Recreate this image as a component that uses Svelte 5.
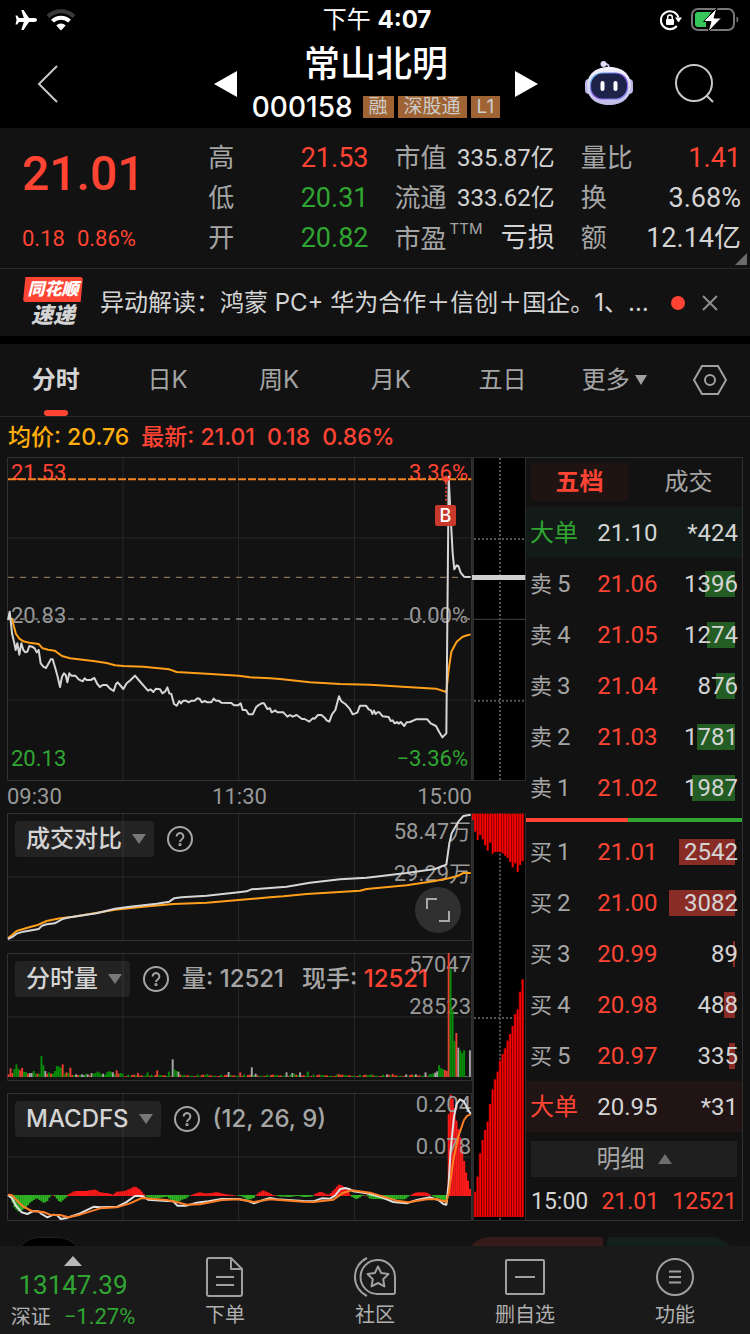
<script>
  const quotes = [
    [
      { label: '高', value: '21.53', tone: 'up' },
      { label: '低', value: '20.31', tone: 'down' },
      { label: '开', value: '20.82', tone: 'down' }
    ],
    [
      { label: '市值', value: '335.87亿', small: true },
      { label: '流通', value: '333.62亿', small: true },
      { label: '市盈', sup: 'TTM', value: '亏损' }
    ],
    [
      { label: '量比', value: '1.41', tone: 'up' },
      { label: '换', value: '3.68%' },
      { label: '额', value: '12.14亿' }
    ]
  ];

  const periods = ['分时', '日K', '周K', '月K', '五日'];

  // depth = bar length as a share of the row width, in percent
  const asks = [
    { side: '卖', n: 5, price: '21.06', qty: '1396', depth: 14 },
    { side: '卖', n: 4, price: '21.05', qty: '1274', depth: 13 },
    { side: '卖', n: 3, price: '21.04', qty: '876', depth: 9 },
    { side: '卖', n: 2, price: '21.03', qty: '1781', depth: 18 },
    { side: '卖', n: 1, price: '21.02', qty: '1987', depth: 20 }
  ];
  const bids = [
    { side: '买', n: 1, price: '21.01', qty: '2542', depth: 26 },
    { side: '买', n: 2, price: '21.00', qty: '3082', depth: 31 },
    { side: '买', n: 3, price: '20.99', qty: '89', depth: 1 },
    { side: '买', n: 4, price: '20.98', qty: '488', depth: 5 },
    { side: '买', n: 5, price: '20.97', qty: '335', depth: 3 }
  ];

  // Chart coordinates: three units per pixel
  const priceLine =
    '24,510 29,485 33,520 36,550 42,575 47,600 52,580 58,614 64,580 70,600 76,607 82,605 88,588 96,590 104,595 110,607 116,600 122,640 130,650 138,654 146,640 152,628 158,628 166,655 173,680 180,711 186,680 192,670 197,675 202,697 208,670 214,677 226,677 236,688 248,694 254,685 260,690 272,690 283,684 292,702 300,711 308,705 320,705 330,716 341,723 348,702 353,697 360,705 370,717 380,700 392,690 405,677 416,690 430,706 444,722 452,718 460,726 468,716 480,718 487,730 496,724 502,712 508,730 514,732 522,762 530,767 538,753 543,760 550,752 558,752 566,757 575,752 584,752 592,745 598,746 606,757 614,753 622,757 634,757 641,746 648,752 656,752 664,758 694,759 702,766 714,766 722,760 728,780 738,780 746,793 758,793 768,772 776,765 785,760 792,760 802,777 810,775 815,787 826,781 832,787 850,787 862,800 870,795 878,800 890,795 906,807 914,807 928,815 938,805 944,806 954,795 964,795 974,803 980,811 988,815 996,793 1006,780 1017,739 1024,754 1036,762 1048,775 1058,793 1072,788 1080,767 1098,767 1106,778 1113,781 1117,792 1122,782 1127,792 1132,787 1138,787 1148,799 1166,801 1172,813 1178,811 1184,820 1192,816 1196,821 1202,816 1213,828 1220,817 1230,816 1248,808 1282,808 1292,820 1308,828 1318,847 1327,862 1339,850 1346,80 1348,120 1352,200 1358,310 1363,358 1370,346 1375,348 1382,368 1392,380 1412,381';
  const averageLine =
    '24,505 36,506 42,530 48,552 58,566 70,574 88,578 116,582 128,595 145,599 164,602 186,618 210,625 280,633 320,639 345,646 370,648 430,650 508,658 530,666 620,671 716,677 750,682 810,685 840,687 930,697 1020,702 1110,704 1220,711 1308,716 1339,726 1346,660 1354,605 1370,575 1388,560 1402,556 1412,553';
  const todayLine =
    '24,417 40,409 50,401 70,395 116,387 126,377 140,373 164,370 190,356 210,352 290,340 345,326 390,320 470,311 508,305 522,295 545,292 620,287 716,277 740,274 754,268 810,264 860,260 930,248 1020,238 1100,233 1220,219 1305,207 1339,194 1348,130 1355,100 1375,65 1390,48 1412,44';
  const previousLine =
    '24,414 36,405 50,393 90,381 110,376 140,363 180,355 220,350 345,329 430,320 520,312 620,308 716,300 810,292 850,289 920,282 1080,272 1100,267 1220,256 1300,244 1350,234 1375,227 1390,219 1412,219';
  const difLine =
    '24,1185 36,1195 48,1217 65,1237 82,1242 100,1233 115,1234 125,1242 142,1252 160,1244 172,1246 182,1257 200,1254 240,1240 282,1220 300,1222 352,1220 378,1207 405,1188 428,1188 444,1199 500,1203 520,1204 532,1217 560,1217 590,1208 625,1204 665,1197 716,1197 745,1203 762,1210 790,1200 810,1194 830,1198 910,1203 940,1204 965,1195 990,1196 1005,1187 1020,1168 1035,1164 1050,1168 1060,1174 1100,1180 1140,1190 1180,1206 1220,1210 1250,1200 1290,1192 1315,1200 1330,1212 1339,1214 1346,1150 1352,1050 1362,950 1370,912 1380,898 1392,905 1402,925 1412,942';
  const deaLine =
    '24,1184 36,1186 50,1201 70,1220 95,1233 130,1236 150,1244 180,1245 205,1252 240,1244 300,1225 350,1222 390,1210 425,1194 450,1196 500,1200 530,1206 560,1214 600,1213 665,1200 716,1198 762,1206 810,1198 910,1205 940,1206 1000,1199 1030,1178 1055,1171 1110,1178 1150,1190 1190,1202 1225,1207 1280,1198 1310,1197 1339,1206 1346,1180 1360,1080 1375,1010 1392,960 1402,947 1412,944';

  const STEP = 5.79;
  const barX = (i) => 23 + i * STEP;

  // Minute volume: colour letter and height for the opening hour, later spikes by position
  const opening =
    'r8 r26 r12 g24 g38 g25 r20 r27 g15 g15 r10 w12 w12 g18 g10 r10 g10 g63 g35 w18 r10 g14 r10 g10 g18 g33 g32 g28 r38 g10 r14 g12 r28 r6 g6 w8 r6 g6 w8 w5 g10 w8 r5 w12 g10 g12 g16 g14 g8 w10 g6 g14 g17 g16 w14 g8 r20 r10 g12 g10'.split(' ');
  const spikes = {
    415: 'r12', 442: 'g14', 470: 'r20', 505: 'g16', 516: 'w53', 522: 'g22', 528: 'g18', 534: 'w16', 620: 'g9',
    684: 'w15', 723: 'r14', 753: 'w29', 766: 'w10', 860: 'w14', 878: 'w12', 885: 'g10', 902: 'w14', 926: 'g16',
    1018: 'r9', 1115: 'g8', 1158: 'w8', 1180: 'r9', 1220: 'w8', 1250: 'w8', 1277: 'w14', 1288: 'g8', 1294: 'g9',
    1300: 'g11', 1306: 'w13', 1312: 'w17', 1318: 'g35', 1324: 'g26', 1330: 'g24', 1336: 'r21', 1341: 'r18',
    1346: 'r372', 1352: 'g325', 1358: 'g200', 1364: 'g108', 1370: 'r132', 1376: 'w88', 1382: 'g80', 1388: 'g72',
    1394: 'g80', 1400: 'w2', 1406: 'w1', 1411: 'w80'
  };
  const volume = [];
  for (let i = 0; i < 240; i++) {
    const c = 'rgwgwrg'[(i * 5 + (i >> 2)) % 7];
    volume.push(opening[i] ?? c + (2 + ((i * 7 + (i >> 1) * 3) % 6)));
  }
  for (const [x, v] of Object.entries(spikes)) {
    volume[Math.min(239, Math.round((Number(x) - 26) / STEP))] = v;
  }
  const volumeFill = { r: '#e8402f', g: '#078c07', w: '#a6a6a6' };

  // MACD histogram, linear between anchor points [x, height]
  const anchors = [
    [24, 5], [30, -4], [45, -40], [58, -50], [75, -38], [90, -22], [110, -8], [130, -22], [140, -20], [150, -2],
    [160, 1], [168, -6], [180, -22], [200, -5], [206, 5], [225, 14], [255, 14], [285, 19], [300, 10], [320, 8],
    [340, 3], [350, 12], [375, 14], [405, 28], [420, 18], [434, 2], [442, -6], [470, -10], [500, -4], [520, -18],
    [535, -18], [560, -8], [572, 2], [595, 10], [620, 7], [650, 10], [680, 4], [705, 1], [725, -3], [745, -14],
    [762, -8], [772, 6], [790, 16], [808, 8], [820, 2], [840, -4], [870, -5], [892, -1], [910, -5], [938, -4],
    [945, 5], [960, 12], [985, 3], [995, 10], [1017, 34], [1030, 28], [1042, 16], [1055, -4], [1070, -12],
    [1085, -2], [1098, 1], [1110, -10], [1150, -12], [1215, -12], [1235, 4], [1250, 10], [1280, 10], [1300, -4],
    [1325, -12], [1341, -22], [1342, 205], [1352, 305], [1360, 285], [1370, 220], [1380, 180], [1388, 130],
    [1398, 70], [1412, 10]
  ];
  const histogram = Array.from({ length: 240 }, (_, i) => {
    const x = barX(i) + STEP / 2;
    const k = Math.max(1, anchors.findIndex((a) => a[0] >= x));
    const [x0, h0] = anchors[k - 1];
    const [x1, h1] = anchors[k];
    return Math.round(h0 + ((h1 - h0) * (x - x0)) / (x1 - x0));
  });

  const chipTop = [60, 95, 120, 105, 118, 136, 152, 128, 161, 156, 156, 156, 160, 167, 174, 186, 202, 190, 216, 195, 183];
  const chipBottom = [1251, 1175, 1130, 1060, 1020, 990, 965, 912, 868, 838, 815, 782, 762, 745, 722, 702, 678, 642, 628, 575, 538];

  let period = $state('分时');
  let book = $state('五档');
</script>

{#snippet grid(top, height)}
  <g class="grid-lines">
    <rect x="22.5" y={top + 1.5} width="1392" height={height - 3} />
    <path d="M369 {top}v{height}M716 {top}v{height}M1064 {top}v{height}" />
  </g>
{/snippet}

{#snippet help(name)}
  <button class="help" aria-label="{name}说明">
    <svg viewBox="0 0 26 26" width="26" height="26">
      <circle cx="13" cy="13" r="12" />
      <path d="M9.600 10.500a3.400 3.400 0 1 1 5.400 2.700c-1.400 1-2 1.500-2 2.800" />
      <circle cx="13" cy="18.600" r=".7" />
    </svg>
  </button>
{/snippet}

{#snippet level(row, kind)}
  <tr class={kind}>
    <th scope="row">{row.side}<span>{row.n}</span></th>
    <td class="up">{row.price}</td>
    <td class="qty"><i style="width: {row.depth * 3}%"></i><b>{row.qty}</b></td>
  </tr>
{/snippet}

<div class="page">
  <div class="status">
    <div class="status-side">
      <svg viewBox="0 0 24 22" width="24" height="22" fill="#fff">
        <path d="M23 11c0-1.300-1.500-1.900-3-1.900h-5L9.500 1H7.300l2.500 8.100H5L3.200 6.500H1.500L2.600 11l-1.100 4.500h1.700L5 12.900h4.800L7.300 21h2.200L15 12.900h5c1.500 0 3-.6 3-1.900z" />
      </svg>
      <svg viewBox="0 0 30 22" width="30" height="22">
        <path d="M2 7.500a18.500 18.500 0 0 1 26 0" fill="none" stroke="#3a3a3a" stroke-width="4" />
        <path d="M6.500 12.200a12 12 0 0 1 17 0" fill="none" stroke="#fff" stroke-width="4" />
        <path d="M15 21.500l-4.700-5a6.500 6.500 0 0 1 9.400 0z" fill="#fff" />
      </svg>
    </div>
    <div class="clock">下午 <b>4:07</b></div>
    <div class="status-side end">
      <svg viewBox="0 0 24 24" width="24" height="24">
        <path d="M20.500 9.500A9 9 0 1 0 18.800 18" fill="none" stroke="#fff" stroke-width="2" />
        <path d="M17 9.500h7l-3.500 5z" fill="#fff" />
        <rect x="8" y="11" width="8" height="6" rx="1" fill="#fff" />
        <path d="M9.700 11V9.300a2.300 2.300 0 0 1 4.600 0V11" fill="none" stroke="#fff" stroke-width="1.500" />
      </svg>
      <svg viewBox="0 0 50 26" width="50" height="26">
        <rect x="2" y="2" width="42" height="21" rx="6" fill="none" stroke="#777" stroke-width="2" />
        <path d="M46.500 9.500c2.500 1 2.500 5 0 6z" fill="#777" />
        <path d="M8 5h13l-5 9v6H8a3 3 0 0 1-3-3V8a3 3 0 0 1 3-3z" fill="#35c759" />
        <path d="M27 1L13.500 14.500H21L18 25l13.500-14H24z" fill="#fff" stroke="#000" stroke-width="1" />
      </svg>
    </div>
  </div>

  <header>
    <button class="icon-button" aria-label="返回">
      <svg viewBox="0 0 24 40" width="24" height="40" fill="none" stroke="#c8c8c8" stroke-width="2">
        <path d="M21 2L3 20l18 18" />
      </svg>
    </button>
    <div class="stock">
      <button class="icon-button" aria-label="上一只">
        <svg viewBox="0 0 23 26" width="23" height="26"><path d="M0 13L23 0v26z" fill="#fff" /></svg>
      </button>
      <div class="names">
        <h1>常山北明</h1>
        <div class="code">
          <span class="digits">000158</span>
          <span class="tag">融</span><span class="tag">深股通</span><span class="tag">L1</span>
        </div>
      </div>
      <button class="icon-button" aria-label="下一只">
        <svg viewBox="0 0 23 26" width="23" height="26"><path d="M23 13L0 0v26z" fill="#fff" /></svg>
      </button>
    </div>
    <div class="tools">
      <button class="icon-button" aria-label="智能助手">
        <svg viewBox="0 0 50 46" width="50" height="46">
          <defs>
            <linearGradient id="shell" x1="0" y1="0" x2="0" y2="1">
              <stop offset="0" stop-color="#f6f4ff" />
              <stop offset="1" stop-color="#bdbbe6" />
            </linearGradient>
            <linearGradient id="rim" x1="0" y1="0" x2="1" y2="1">
              <stop offset="0" stop-color="#53c8f5" />
              <stop offset=".5" stop-color="#8b4be8" />
              <stop offset="1" stop-color="#6f8df2" />
            </linearGradient>
          </defs>
          <path d="M25 8c0-4-1-5-5-5.500" fill="none" stroke="#c9c6ee" stroke-width="2" />
          <circle cx="19.500" cy="3" r="3" fill="#dedcf8" />
          <rect x="1" y="18" width="8" height="15" rx="4" fill="#b9b5e4" />
          <rect x="41" y="18" width="8" height="15" rx="4" fill="#b9b5e4" />
          <path d="M25 6c13 0 22 7 22 19S38 44 25 44 3 37 3 25 12 6 25 6z" fill="url(#shell)" />
          <rect x="6.500" y="12" width="37" height="26" rx="12" fill="#1d2348" stroke="url(#rim)" stroke-width="1.200" />
          <rect x="16.500" y="20" width="4" height="10" rx="2" fill="#fff" />
          <rect x="29.500" y="20" width="4" height="10" rx="2" fill="#fff" />
        </svg>
      </button>
      <button class="icon-button" aria-label="搜索">
        <svg viewBox="0 0 42 42" width="42" height="42" fill="none" stroke="#c8c8c8" stroke-width="2">
          <circle cx="20" cy="20" r="18" /><path d="M33 33l6 6" />
        </svg>
      </button>
    </div>
  </header>

  <section class="summary">
    <div class="last">
      <strong>21.01</strong>
      <div><span>0.18</span><span>0.86%</span></div>
    </div>
    {#each quotes as column}
      <dl>
        {#each column as q}
          <div>
            <dt>{q.label}{#if q.sup}<sup>{q.sup}</sup>{/if}</dt>
            <dd class={q.tone} class:small={q.small}>{q.value}</dd>
          </div>
        {/each}
      </dl>
    {/each}
    <svg class="corner" viewBox="0 0 12 12" width="12" height="12"><path d="M12 0v12H0z" fill="#6b6b6b" /></svg>
  </section>

  <section class="news">
    <div class="badge"><span class="badge-top">同花顺</span><span class="badge-bottom">速递</span></div>
    <a href="#news">异动解读：鸿蒙 PC+ 华为合作＋信创＋国企。1、…</a>
    <i class="dot"></i>
    <button class="icon-button" aria-label="关闭">
      <svg viewBox="0 0 18 18" width="18" height="18" stroke="#8d8d8d" stroke-width="2"><path d="M2 2l14 14M16 2L2 16" /></svg>
    </button>
  </section>

  <nav class="periods">
    {#each periods as p}
      <button class:active={period === p} onclick={() => (period = p)}>{p}</button>
    {/each}
    <button>更多<svg viewBox="0 0 12 10" width="12" height="10"><path d="M0 0h12L6 10z" fill="#a0a0a0" /></svg></button>
    <button aria-label="设置">
      <svg viewBox="0 0 36 32" width="36" height="32" fill="none" stroke="#a0a0a0" stroke-width="2">
        <path d="M10 2h16l8 14-8 14H10L2 16z" /><circle cx="18" cy="16" r="5" />
      </svg>
    </button>
  </nav>

  <p class="figures">
    <span class="gold">均价: 20.76</span><span>最新: 21.01</span><span>0.18</span><span>0.86%</span>
  </p>

  <main>
    <div class="charts">
      <div class="panel price">
        <span class="mark tl up">21.53</span><span class="mark tr up">3.36%</span>
        <span class="mark ml">20.83</span><span class="mark mr">0.00%</span>
        <span class="mark bl down">20.13</span><span class="mark br down">−3.36%</span>
        <svg class="plot" viewBox="21 21 1395 972" preserveAspectRatio="none">
          {@render grid(21, 972)}
          <path class="grid-line" d="M24 264H1414M24 750H1414" />
          <path d="M24 507H1414" stroke="#6a6a6a" stroke-dasharray="6 6" />
          <path class="thin" d="M24 382H1414" stroke="#a58c68" stroke-dasharray="6 6" />
          <path d="M24 88H1414" stroke="#f5831f" stroke-dasharray="8 2" />
          <polyline points={averageLine} stroke="#ff9f1a" />
          <polyline points={priceLine} stroke="#d6d6d6" />
          <path d="M1338 98V160" stroke="#c8382b" stroke-dasharray="2 2" />
          <path d="M1338 76l12 12-12 12-12-12z" fill="#ff4433" />
        </svg>
        <span class="buy">B</span>
      </div>
      <div class="axis"><span>09:30</span><span>11:30</span><span>15:00</span></div>

      <div class="panel">
        <div class="panel-head">
          <button class="pick">成交对比<i></i></button>
          {@render help('成交对比')}
        </div>
        <div class="scale lowered"><span>58.47万</span><span>29.29万</span></div>
        <svg class="plot" viewBox="21 39 1395 384" preserveAspectRatio="none">
          {@render grid(39, 384)}
          <path class="grid-line" d="M24 231H1414" />
          <polyline points={previousLine} stroke="#ff9f1a" />
          <polyline points={todayLine} stroke="#d6d6d6" />
        </svg>
        <button class="expand" aria-label="全屏">
          <svg viewBox="0 0 24 24" width="24" height="24" fill="none" stroke="#a8a8a8" stroke-width="2">
            <path d="M1 11V1h10M23 13v10H13" />
          </svg>
        </button>
      </div>

      <div class="panel">
        <div class="panel-head">
          <button class="pick">分时量<i></i></button>
          {@render help('分时量')}
          <span>量: 12521</span><span class="hand">现手: <b class="up">12521</b></span>
        </div>
        <div class="scale"><span>57047</span><span>28523</span></div>
        <svg class="plot" viewBox="21 459 1395 384" preserveAspectRatio="none">
          {@render grid(459, 384)}
          <path class="grid-line" d="M24 651H1414" />
          {#each volume as v, i}
            <rect x={barX(i)} y={831 - Number(v.slice(1))} width={STEP} height={v.slice(1)} fill={volumeFill[v[0]]} />
          {/each}
        </svg>
      </div>

      <div class="panel">
        <div class="panel-head">
          <button class="pick">MACDFS<i></i></button>
          {@render help('MACDFS')}
          <span>(12, 26, 9)</span>
        </div>
        <svg class="plot" viewBox="21 879 1395 384" preserveAspectRatio="none">
          {@render grid(879, 384)}
          <path class="grid-line" d="M24 1071H1414" />
          {#each histogram as h, i}
            <rect x={barX(i)} y={h > 0 ? 1187 - h : 1185} width={STEP + 0.4} height={Math.abs(h) + 1} fill={h > 0 ? '#ff1a1a' : '#2fb324'} />
          {/each}
        </svg>
        <div class="scale"><span>0.204</span><span>0.078</span></div>
        <svg class="plot" viewBox="21 879 1395 384" preserveAspectRatio="none">
          <polyline points={difLine} stroke="#e0e0e0" />
          <polyline points={deaLine} stroke="#ff7f27" />
        </svg>
      </div>
    </div>

    <div class="chips">
      <svg class="chips-price" viewBox="636 21 162 972" preserveAspectRatio="none">
        <rect x="636" y="21" width="162" height="972" fill="#2b2b2b" />
        <rect x="642" y="24" width="153" height="966" fill="#000" />
        <path d="M642 267H795M642 752H795M720 24V990" stroke="#555" stroke-width="2" stroke-dasharray="2 2" />
        <path d="M642 508H795" stroke="#444" />
        <rect x="636" y="375" width="160" height="15" fill="#cfcfcf" />
      </svg>
      <svg class="chips-volume" viewBox="636 39 162 1224" preserveAspectRatio="none">
        <rect x="636" y="39" width="162" height="1224" fill="#2b2b2b" />
        <rect x="642" y="41" width="153" height="1219" fill="#000" />
        <path d="M642 654H795M720 41V1260" stroke="#555" stroke-width="2" stroke-dasharray="2 2" />
        {#each chipTop as y, i}
          <rect x={635 + i * 7.5} y="41" width="6" height={y - 41} fill="#f00" />
          <rect x={641 + i * 7.5} y="41" width="1.500" height={y - 46} fill="#8d0000" />
        {/each}
        {#each chipBottom as y, i}
          <rect x={635 + i * 7.5} y={y} width="6" height={1251 - y} fill="#f00" />
          <rect x={633.5 + i * 7.5} y={y} width="1.500" height={1251 - y} fill="#8d0000" />
        {/each}
      </svg>
    </div>

    <aside>
      <div class="book-tabs">
        {#each ['五档', '成交'] as b}
          <button class:active={book === b} onclick={() => (book = b)}>{b}</button>
        {/each}
      </div>
      <table>
        <tbody>
          <tr class="big-ask"><th scope="row" class="down">大单</th><td>21.10</td><td class="qty"><b>*424</b></td></tr>
          {#each asks as row}{@render level(row, 'ask')}{/each}
        </tbody>
      </table>
      <div class="ratio"><i></i></div>
      <table>
        <tbody>
          {#each bids as row}{@render level(row, 'bid')}{/each}
          <tr class="big-bid"><th scope="row" class="up">大单</th><td>20.95</td><td class="qty"><b>*31</b></td></tr>
        </tbody>
      </table>
      <button class="details">明细<i></i></button>
      <div class="trade"><span>15:00</span><span class="up">21.01</span><span class="up">12521</span></div>
    </aside>
  </main>

  <div class="peek"><i class="peek-dark"></i><i class="peek-buy"></i><i class="peek-sell"></i></div>

  <nav class="bottom">
    <button class="index">
      <i></i>
      <strong>13147.39</strong>
      <span>深证 <b>−1.27%</b></span>
    </button>
    <button>
      <svg viewBox="0 0 40 42" width="40" height="42">
        <path d="M4 2h22l11 11v25a2 2 0 0 1-2 2H4a2 2 0 0 1-2-2V4a2 2 0 0 1 2-2z" /><path d="M26 2v11h11M11 21h18M11 29h18" />
      </svg>
      下单
    </button>
    <button>
      <svg viewBox="0 0 44 42" width="44" height="42">
        <path d="M24 4h1a17 17 0 0 1 17 17v15a2 2 0 0 1-2 2H25a17 17 0 0 1-1-34z" />
        <path d="M14 2a21 21 0 0 0 0 38" />
        <path d="M25 10.500l3.200 6.600 7.200 1-5.200 5.100 1.200 7.200-6.400-3.400-6.400 3.400 1.200-7.200-5.200-5.100 7.200-1z" />
      </svg>
      社区
    </button>
    <button>
      <svg viewBox="0 0 42 42" width="42" height="42">
        <rect x="2" y="4" width="38" height="34" rx="1" /><path d="M11 21h20" />
      </svg>
      删自选
    </button>
    <button>
      <svg viewBox="0 0 42 42" width="42" height="42">
        <circle cx="21" cy="21" r="18" /><path d="M15 15.500h12M15 21h12M15 26.500h12" />
      </svg>
      功能
    </button>
  </nav>
</div>

<style>
  :global(body) {
    background: #121212;
  }
  .page {
    --up: #ff4433;
    --down: #31a531;
    --line: #292929;
    --text: #d4d4d4;
    --muted: #a5a5a5;
    --num: Roboto, 'Noto Sans CJK SC', sans-serif;
    min-height: 100vh;
    display: flex;
    flex-direction: column;
    background: #121212;
    color: var(--text);
    font-family: Inter, 'Noto Sans CJK SC', sans-serif;
    font-size: 24px;
    line-height: 32px;
  }
  .page :global(*) {
    box-sizing: border-box;
  }
  svg {
    display: block;
    flex: none;
  }
  button {
    background: none;
    border: 0;
    padding: 0;
    margin: 0;
    color: inherit;
    font: inherit;
    cursor: pointer;
  }
  h1,
  p,
  dl,
  dd {
    margin: 0;
  }
  .up {
    color: var(--up);
  }
  .down {
    color: var(--down);
  }
  .icon-button {
    display: flex;
    flex: none;
  }

  .status {
    display: grid;
    grid-template-columns: 1fr auto 1fr;
    align-items: center;
    height: 40px;
    padding: 0 10px 0 14px;
    background: #000;
    color: #fff;
    font-size: 24px;
  }
  .status-side {
    display: flex;
    align-items: center;
    gap: 8px;
  }
  .end {
    justify-content: flex-end;
  }
  header {
    display: grid;
    grid-template-columns: 1fr auto 1fr;
    align-items: center;
    height: 88px;
    padding: 0 34px 0 36px;
    background: #000;
    color: #fff;
  }
  .stock {
    display: flex;
    align-items: center;
    gap: 15px;
  }
  .names {
    display: flex;
    flex-direction: column;
    align-items: center;
  }
  h1 {
    font-size: 36px;
    line-height: 46px;
    font-weight: 500;
  }
  .code {
    display: flex;
    align-items: center;
    gap: 4px;
    height: 40px;
  }
  .digits {
    font-size: 28px;
    font-weight: 500;
    margin-right: 6px;
  }
  .tag {
    padding: 0 6px;
    background: #a06434;
    color: #ccc;
    font-size: 19px;
    line-height: 22px;
  }
  .tools {
    display: flex;
    align-items: center;
    justify-content: flex-end;
    gap: 40px;
  }

  .summary {
    position: relative;
    display: grid;
    grid-template-columns: repeat(4, 1fr);
    gap: 26px;
    height: 141px;
    padding: 10px 9px 0 22px;
    border-bottom: 1px solid var(--line);
  }
  .last {
    color: var(--up);
    font-family: var(--num);
  }
  .last strong {
    display: block;
    font-size: 48px;
    line-height: 72px;
    font-weight: 500;
  }
  .last div {
    display: flex;
    gap: 12px;
    padding-top: 13px;
    font-size: 22px;
  }
  dl div {
    display: flex;
    justify-content: space-between;
    align-items: center;
    height: 40px;
    white-space: nowrap;
  }
  dt {
    color: var(--muted);
    font-size: 26px;
  }
  sup {
    font-size: 15px;
    line-height: 16px;
    vertical-align: 14px;
    margin-left: 3px;
  }
  dd {
    font-family: var(--num);
    font-size: 27px;
  }
  dd.small {
    font-size: 24px;
  }
  .corner {
    position: absolute;
    right: 3px;
    bottom: 3px;
  }

  .news {
    display: flex;
    align-items: center;
    height: 75px;
    padding: 0 31px 0 23px;
    border-bottom: 8px solid #000;
  }
  .badge {
    display: flex;
    flex-direction: column;
    flex: none;
    width: 60px;
    margin-right: 17px;
    font-weight: 900;
    font-style: italic;
    text-align: center;
  }
  .badge-top {
    background: var(--up);
    border-radius: 3px;
    color: #fff;
    font-size: 17px;
    line-height: 25px;
    clip-path: polygon(4% 0, 100% 0, 96% 100%, 0 100%);
  }
  .badge-bottom {
    font-size: 22px;
    line-height: 26px;
  }
  .news a {
    flex: 1;
    min-width: 0;
    overflow: hidden;
    white-space: nowrap;
    color: var(--text);
    text-decoration: none;
  }
  .dot {
    flex: none;
    width: 14px;
    height: 14px;
    margin: 0 16px 0 20px;
    border-radius: 50%;
    background: var(--up);
  }

  .periods {
    display: grid;
    grid-template-columns: repeat(6, 1fr) 80px;
    height: 73px;
    border-bottom: 1px solid var(--line);
    color: var(--muted);
  }
  .periods button {
    position: relative;
    display: flex;
    align-items: center;
    justify-content: center;
    gap: 5px;
  }
  .periods .active {
    color: var(--text);
    font-weight: 700;
  }
  .periods .active::after {
    content: '';
    position: absolute;
    bottom: 0;
    width: 24px;
    height: 6px;
    border-radius: 3px;
    background: var(--up);
  }
  .figures {
    display: flex;
    align-items: center;
    gap: 12px;
    height: 40px;
    padding: 0 8px;
    color: var(--up);
    font-size: 23px;
    font-weight: 500;
  }
  .gold {
    color: #ffae0d;
  }

  main {
    display: grid;
    grid-template-columns: 465fr 54fr 217fr;
    padding: 0 7px;
  }
  .charts,
  .chips,
  aside {
    min-width: 0;
  }
  .panel {
    position: relative;
    height: 128px;
    margin-bottom: 12px;
  }
  .panel:last-child {
    margin-bottom: 0;
  }
  .panel.price {
    height: 324px;
    margin-bottom: 0;
  }
  .plot {
    position: absolute;
    inset: 0;
    width: 100%;
    height: 100%;
    pointer-events: none;
  }
  .plot path,
  .plot polyline {
    fill: none;
    stroke-width: 2;
    stroke-linejoin: round;
    vector-effect: non-scaling-stroke;
  }
  .plot path[fill] {
    fill: var(--up);
  }
  .plot .thin {
    stroke-width: 1;
  }
  .plot .grid-line,
  .grid-lines path {
    stroke: #fff;
    stroke-opacity: 0.09;
    stroke-width: 1;
  }
  .grid-lines rect {
    fill: none;
    stroke: #303030;
    stroke-width: 1;
    vector-effect: non-scaling-stroke;
  }
  .chips path {
    vector-effect: non-scaling-stroke;
  }
  .mark,
  .scale,
  .axis {
    color: #999;
    font-family: var(--num);
    font-size: 22px;
    line-height: 28px;
  }
  .mark,
  .scale {
    position: absolute;
  }
  .mark.up {
    color: var(--up);
  }
  .mark.down {
    color: var(--down);
  }
  .tl,
  .tr {
    top: 2px;
  }
  .ml,
  .mr {
    top: 145px;
  }
  .bl,
  .br {
    bottom: 8px;
  }
  .tl,
  .ml,
  .bl {
    left: 4px;
  }
  .tr,
  .mr,
  .br {
    right: 4px;
  }
  .buy {
    position: absolute;
    top: 48px;
    left: 94.4%;
    width: 21px;
    margin-left: -11px;
    background: #c8382b;
    border-radius: 2px;
    color: #fff;
    font-size: 18px;
    font-weight: 500;
    line-height: 21px;
    text-align: center;
  }
  .axis {
    display: flex;
    justify-content: space-between;
    align-items: center;
    height: 32px;
  }
  .panel-head {
    display: flex;
    align-items: center;
    height: 52px;
    padding-left: 8px;
    color: var(--muted);
    font-weight: 500;
    white-space: nowrap;
  }
  .panel-head span {
    margin-left: 13px;
  }
  .panel-head .hand {
    margin-left: 18px;
  }
  .panel-head b {
    font-weight: 500;
  }
  .pick {
    display: flex;
    align-items: center;
    gap: 10px;
    height: 36px;
    padding: 0 8px 0 11px;
    border-radius: 4px;
    background: #232323;
    color: var(--text);
  }
  .pick i {
    border: 7px solid transparent;
    border-top: 10px solid #777;
    border-bottom: 0;
  }
  .help {
    margin-left: 13px;
  }
  .help svg {
    fill: none;
    stroke: var(--muted);
    stroke-width: 2;
  }
  .scale {
    top: -2px;
    right: 1px;
    display: flex;
    flex-direction: column;
    gap: 14px;
    text-align: right;
  }
  .scale.lowered {
    top: 5px;
  }
  .expand {
    position: absolute;
    right: 11px;
    bottom: 8px;
    display: flex;
    align-items: center;
    justify-content: center;
    width: 46px;
    height: 46px;
    border-radius: 50%;
    background: #303030;
  }

  .chips {
    display: flex;
    flex-direction: column;
    gap: 32px;
  }
  .chips svg {
    width: 100%;
  }
  .chips-price {
    height: 324px;
  }
  .chips-volume {
    height: 408px;
  }

  aside {
    display: flex;
    flex-direction: column;
    border: 1px solid #303030;
    border-left: 0;
  }
  .book-tabs {
    display: grid;
    grid-template-columns: 97fr 97fr;
    gap: 12px;
    height: 49px;
    padding: 5px 5px 6px;
    color: var(--muted);
  }
  .book-tabs .active {
    border-radius: 4px;
    background: #201413;
    color: var(--up);
    font-weight: 700;
  }
  table {
    width: 100%;
    table-layout: fixed;
    border-collapse: collapse;
    font-family: var(--num);
  }
  tr {
    height: 51px;
  }
  th,
  td {
    padding: 1px 0 0;
    font-weight: 400;
    text-align: left;
  }
  th {
    width: 33%;
    padding-left: 4px;
  }
  th:not(.up, .down) {
    color: var(--muted);
    font-size: 22px;
  }
  th span {
    margin-left: 5px;
    font-size: 24px;
  }
  .qty {
    position: relative;
    width: 33%;
    padding-right: 4px;
    text-align: right;
  }
  .qty b {
    position: relative;
    font-weight: 400;
  }
  .qty i {
    position: absolute;
    top: 13px;
    right: 7px;
    height: 26px;
  }
  .ask i {
    background: #235d23;
  }
  .bid i {
    background: #8a2c26;
  }
  .big-ask {
    background: #121b17;
  }
  .big-bid {
    background: #201514;
  }
  .ratio {
    height: 4px;
    margin: 5px 0 4px;
    background: var(--down);
  }
  .ratio i {
    display: block;
    width: 47%;
    height: 100%;
    background: var(--up);
  }
  .details {
    display: flex;
    align-items: center;
    justify-content: center;
    gap: 13px;
    height: 36px;
    margin: 9px 5px 6px;
    background: #1f1f1f;
    color: var(--muted);
  }
  .details i {
    border: 7px solid transparent;
    border-bottom: 10px solid #6e6e6e;
    border-top: 0;
  }
  .trade {
    display: flex;
    flex: 1;
    align-items: center;
    justify-content: space-between;
    padding: 0 5px;
    font-family: var(--num);
    font-size: 23px;
  }

  .peek {
    display: flex;
    align-items: flex-start;
    height: 25px;
    padding: 16px 15px 0;
    overflow: hidden;
  }
  .peek i {
    flex: none;
    height: 48px;
  }
  .peek-dark {
    width: 67px;
    margin-right: auto;
    border: 1px solid #222;
    border-radius: 30px;
    background: #000;
  }
  .peek-buy {
    width: 137px;
    margin-right: 4px;
    border-radius: 24px 4px 0 0;
    background: #351b19;
  }
  .peek-sell {
    width: 128px;
    border-radius: 4px 24px 0 0;
    background: #13211a;
  }

  .bottom {
    display: grid;
    grid-template-columns: repeat(5, 1fr);
    height: 88px;
    background: #1a1a1a;
    color: #b0b0b0;
    font-size: 20px;
    line-height: 26px;
  }
  .bottom button {
    display: flex;
    flex-direction: column;
    align-items: center;
    justify-content: flex-start;
    gap: 4px;
    padding-top: 10px;
  }
  .bottom svg {
    fill: none;
    stroke: #a0a0a0;
    stroke-width: 2;
    stroke-linejoin: round;
  }
  .bottom .index {
    gap: 2px;
    padding-right: 4px;
    font-family: var(--num);
  }
  .index i {
    border: 9px solid transparent;
    border-bottom: 10px solid #b8b8b8;
    border-top: 0;
  }
  .index strong,
  .index b {
    color: var(--down);
    font-weight: 400;
  }
  .index strong {
    font-size: 26px;
    line-height: 34px;
  }
  .index b {
    margin-left: 8px;
    font-size: 22px;
  }
</style>
